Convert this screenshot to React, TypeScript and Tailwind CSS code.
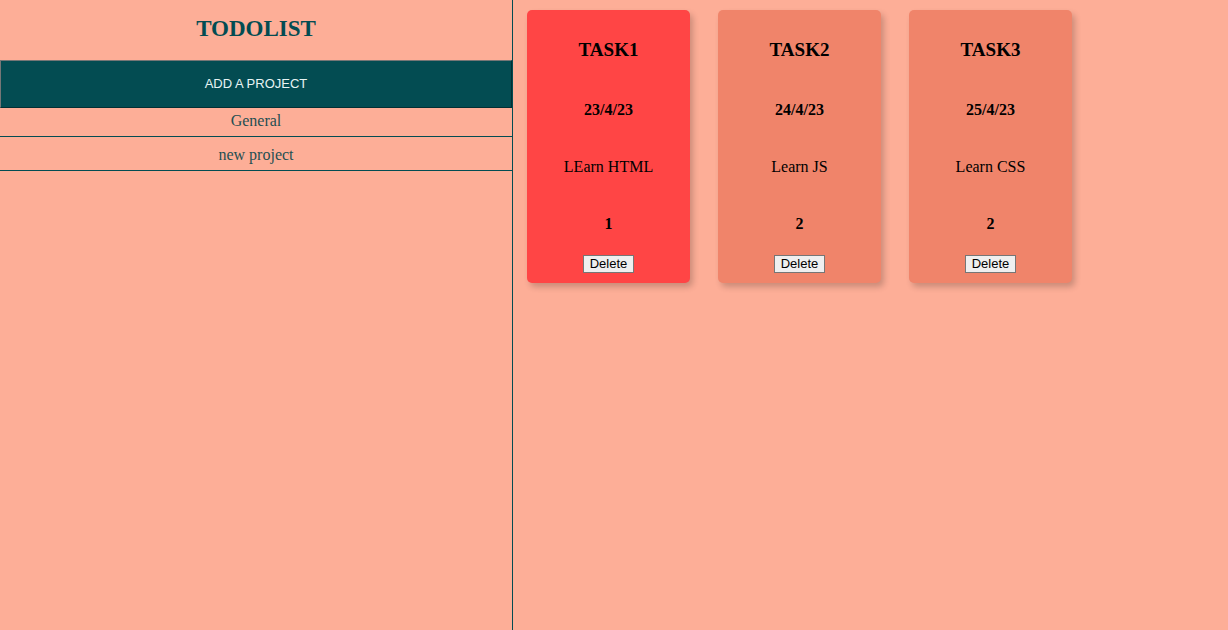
import React from "react";

const tasks = [
  { title: "TASK1", date: "23/4/23", desc: "LEarn HTML", prio: "1", bg: "bg-[#ff4545]" },
  { title: "TASK2", date: "24/4/23", desc: "Learn JS", prio: "2", bg: "bg-[#f0846a]" },
  { title: "TASK3", date: "25/4/23", desc: "Learn CSS", prio: "2", bg: "bg-[#f0846a]" },
];

export default function App() {
  return (
    <div className="flex h-[630px] w-[1228px] bg-[#fdae97] font-['Liberation_Serif',serif] overflow-hidden">
      <div className="flex w-[513px] shrink-0 flex-col border-r border-[#034c52]">
        <div className="flex h-[60px] items-center justify-center pb-[4px]">
          <h1 className="text-[23px] font-bold leading-none text-[#034c52]">TODOLIST</h1>
        </div>
        <button className="h-[48px] w-full border-t border-l border-[#767676] border-b border-r border-b-[#022f33] border-r-[#022f33] bg-[#034c52] font-['Liberation_Sans',sans-serif] text-[13px] text-[#e8f4f4]">
          ADD A PROJECT
        </button>
        <div className="flex h-[29px] items-center justify-center border-b border-[#034c52] pb-[2px] text-[16px] text-[#1f4f52]">
          General
        </div>
        <div className="flex h-[34px] items-center justify-center border-b border-[#034c52] pt-[2px] text-[16px] text-[#1f4f52]">
          new project
        </div>
      </div>
      <div className="flex items-start gap-[28px] pl-[14px] pt-[10px]">
        {tasks.map((t) => (
          <div
            key={t.title}
            className={`${t.bg} flex h-[273px] w-[163px] flex-col items-center rounded-[5px] pt-[29px] shadow-[3px_4px_6px_rgba(0,0,0,0.2)] text-black`}
          >
            <div className="h-[22px] text-[19px] font-bold leading-[22px]">{t.title}</div>
            <div className="mt-[40px] h-[18px] text-[16px] font-bold leading-[18px]">{t.date}</div>
            <div className="mt-[39px] h-[18px] text-[16px] leading-[18px]">{t.desc}</div>
            <div className="mt-[39px] h-[18px] text-[16px] font-bold leading-[18px]">{t.prio}</div>
            <button className="mt-[22px] h-[18px] border border-[#767676] bg-[#efefef] px-[6px] font-['Liberation_Sans',sans-serif] text-[13px] leading-[14px] text-black">
              Delete
            </button>
          </div>
        ))}
      </div>
    </div>
  );
}
